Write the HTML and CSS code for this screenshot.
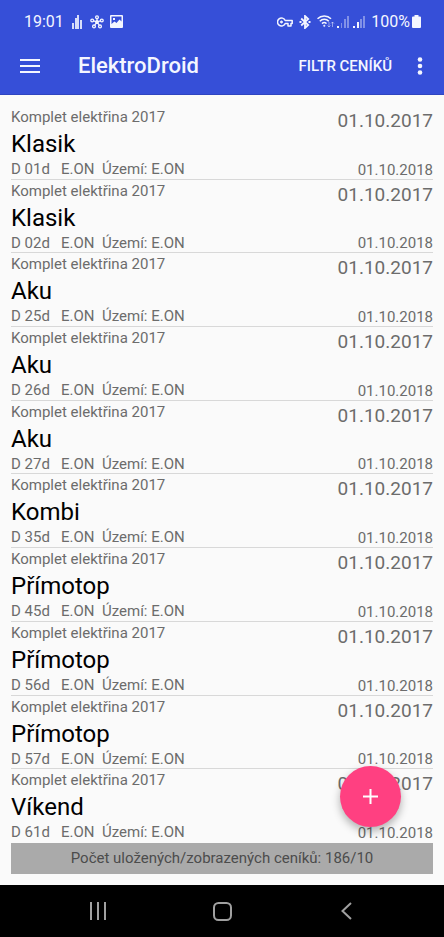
FILE: index.html
```html
<!DOCTYPE html>
<html lang="cs">
<head>
<meta charset="utf-8">
<meta name="viewport" content="width=device-width, initial-scale=1">
<title>ElektroDroid</title>
<link rel="stylesheet" href="styles.css">
</head>
<body>
<header class="top">
  <div class="status">
    <span class="clock">19:01</span>
    <svg class="ic-bars" width="10" height="16" viewBox="0 0 10 16" fill="currentColor"><path d="M0 9h2v6H0zM3 4h2v11H3zM5 1h2v14H5zM8 6h2v9H8z" opacity=".85"/></svg>
    <svg class="ic-hub" width="14" height="14" viewBox="0 0 14 14" fill="none" stroke="currentColor" stroke-width="1.300"><path d="M7 7V3.500M7 7L3.500 5.800M7 7l3.500-1.200M7 7l-2.200 3.200M7 7l2.200 3.200"/><circle cx="7" cy="2.200" r="1.400"/><circle cx="2.200" cy="5.500" r="1.400"/><circle cx="11.800" cy="5.500" r="1.400"/><circle cx="4" cy="11.400" r="1.400"/><circle cx="10" cy="11.400" r="1.400"/><circle cx="7" cy="7" r="1.300" fill="currentColor"/></svg>
    <svg class="ic-image" width="13" height="13" viewBox="0 0 13 13"><path fill="currentColor" fill-rule="evenodd" d="M1 0h11a1 1 0 0 1 1 1v11a1 1 0 0 1-1 1H1a1 1 0 0 1-1-1V1a1 1 0 0 1 1-1zM1.500 1.500V9l3-2.500 2 1.500 3-3.500 2 2v-5zM3 3h2v2H3z"/></svg>
    <span class="spacer"></span>
    <svg class="ic-key" width="16" height="10" viewBox="0 0 16 10" fill="none" stroke="currentColor" stroke-width="1.500"><path d="M8.200 3.500A4 4 0 1 0 8.200 6.500H11V9h3V6.500h1.200v-3z" stroke-linejoin="round"/><circle cx="4.500" cy="5" r="1" fill="currentColor" stroke-width="1"/></svg>
    <svg class="ic-bt" width="12" height="14" viewBox="0 0 12 14" fill="none" stroke="currentColor" stroke-width="1.800"><path d="M2.200 3.500l7 6.500L6 13V1l3.200 3-7 6.500"/><path d="M.5 7H2.500M9.500 7h2"/></svg>
    <svg class="ic-wifi" width="18" height="15" viewBox="0 0 18 15" fill="none" stroke="currentColor" stroke-width="1.500"><path d="M.5 4.800a9.500 9.500 0 0 1 13.500 0M2.800 7.300a6.200 6.200 0 0 1 9 0M5 9.600a3.200 3.200 0 0 1 4.500 0"/><circle cx="7.300" cy="11.800" r=".8" fill="currentColor" stroke-width=".5"/><path d="M12 8v5M10.500 11.500L12 13l1.500-1.500M15.500 13V8M14 9.500L15.500 8 17 9.500" stroke-width="1" opacity=".5"/></svg>
    <svg class="ic-sig1" width="12" height="13" viewBox="0 0 12 13" fill="currentColor"><path d="M0 11h2v2H0z"/><path d="M4 8h1v5H4zM7 4h2v9H7zM10 1h2v12h-2z" opacity=".4"/></svg>
    <svg class="ic-sig2" width="12" height="13" viewBox="0 0 12 13" fill="currentColor"><path d="M0 11h2v2H0zM4 7h2v6H4z"/><path d="M7 4h2v9H7zM10 1h2v12h-2z" opacity=".4"/></svg>
    <span class="percent">100%</span>
    <svg class="ic-batt" width="9" height="13" viewBox="0 0 9 13" fill="currentColor"><path d="M2.500 0h4v1.500H8a1 1 0 0 1 1 1V12a1 1 0 0 1-1 1H1a1 1 0 0 1-1-1V2.500a1 1 0 0 1 1-1h1.500z"/></svg>
  </div>
  <div class="toolbar">
    <button class="icon-btn menu" aria-label="Menu"><svg width="20" height="14" viewBox="0 0 20 14" fill="currentColor"><path d="M0 0h20v2H0zM0 6h20v2H0zM0 12h20v2H0z"/></svg></button>
    <h1 class="title">ElektroDroid</h1>
    <button class="filter">FILTR CENÍKŮ</button>
    <button class="icon-btn more" aria-label="Více"><svg width="6" height="18" viewBox="0 0 6 18" fill="currentColor"><circle cx="3" cy="2.500" r="2.300"/><circle cx="3" cy="9" r="2.300"/><circle cx="3" cy="15.500" r="2.300"/></svg></button>
  </div>
</header>
<main class="content">
  <ul class="list">
    <li class="row"><div class="info"><span class="small">Komplet elektřina 2017</span><span class="name">Klasik</span><span class="small detail">D 01d   E.ON  Území: E.ON</span></div><div class="dates"><span class="from">01.10.2017</span><span class="small">01.10.2018</span></div></li>
    <li class="row"><div class="info"><span class="small">Komplet elektřina 2017</span><span class="name">Klasik</span><span class="small detail">D 02d   E.ON  Území: E.ON</span></div><div class="dates"><span class="from">01.10.2017</span><span class="small">01.10.2018</span></div></li>
    <li class="row"><div class="info"><span class="small">Komplet elektřina 2017</span><span class="name">Aku</span><span class="small detail">D 25d   E.ON  Území: E.ON</span></div><div class="dates"><span class="from">01.10.2017</span><span class="small">01.10.2018</span></div></li>
    <li class="row"><div class="info"><span class="small">Komplet elektřina 2017</span><span class="name">Aku</span><span class="small detail">D 26d   E.ON  Území: E.ON</span></div><div class="dates"><span class="from">01.10.2017</span><span class="small">01.10.2018</span></div></li>
    <li class="row"><div class="info"><span class="small">Komplet elektřina 2017</span><span class="name">Aku</span><span class="small detail">D 27d   E.ON  Území: E.ON</span></div><div class="dates"><span class="from">01.10.2017</span><span class="small">01.10.2018</span></div></li>
    <li class="row"><div class="info"><span class="small">Komplet elektřina 2017</span><span class="name">Kombi</span><span class="small detail">D 35d   E.ON  Území: E.ON</span></div><div class="dates"><span class="from">01.10.2017</span><span class="small">01.10.2018</span></div></li>
    <li class="row"><div class="info"><span class="small">Komplet elektřina 2017</span><span class="name">Přímotop</span><span class="small detail">D 45d   E.ON  Území: E.ON</span></div><div class="dates"><span class="from">01.10.2017</span><span class="small">01.10.2018</span></div></li>
    <li class="row"><div class="info"><span class="small">Komplet elektřina 2017</span><span class="name">Přímotop</span><span class="small detail">D 56d   E.ON  Území: E.ON</span></div><div class="dates"><span class="from">01.10.2017</span><span class="small">01.10.2018</span></div></li>
    <li class="row"><div class="info"><span class="small">Komplet elektřina 2017</span><span class="name">Přímotop</span><span class="small detail">D 57d   E.ON  Území: E.ON</span></div><div class="dates"><span class="from">01.10.2017</span><span class="small">01.10.2018</span></div></li>
    <li class="row"><div class="info"><span class="small">Komplet elektřina 2017</span><span class="name">Víkend</span><span class="small detail">D 61d   E.ON  Území: E.ON</span></div><div class="dates"><span class="from">01.10.2017</span><span class="small">01.10.2018</span></div></li>
  </ul>
  <p class="summary">Počet uložených/zobrazených ceníků: 186/10</p>
  <button class="fab" aria-label="Přidat ceník"><svg width="15" height="15" viewBox="0 0 15 15" fill="currentColor"><path d="M6.500 0h2v6.500H15v2H8.500V15h-2V8.500H0v-2h6.500z"/></svg></button>
</main>
<nav class="navbar">
  <button class="nav-btn" aria-label="Poslední aplikace"><svg width="18" height="18" viewBox="0 0 18 18" fill="none" stroke="currentColor" stroke-width="2"><path d="M2 0v18M9 0v18M16 0v18"/></svg></button>
  <button class="nav-btn" aria-label="Domů"><svg width="19" height="19" viewBox="0 0 19 19" fill="none" stroke="currentColor" stroke-width="2"><rect x="1" y="1" width="17" height="17" rx="4.500"/></svg></button>
  <button class="nav-btn" aria-label="Zpět"><svg width="18" height="18" viewBox="0 0 18 18" fill="none" stroke="currentColor" stroke-width="2"><path d="M14 1L5.500 9l8.500 8"/></svg></button>
</nav>
</body>
</html>
```
FILE: styles.css
```css
* {
  box-sizing: border-box;
}

body {
  margin: 0;
  min-height: 100vh;
  display: flex;
  flex-direction: column;
  background: #fafafa;
  color: #000;
  font-family: Roboto, "Noto Sans", sans-serif;
}

button {
  border: 0;
  padding: 0;
  background: none;
  color: inherit;
  font-family: inherit;
  cursor: pointer;
}

svg {
  display: block;
  flex: none;
}

.top {
  background: #364fd8;
  color: #f4f6ff;
  border-bottom: 1px solid #2f45c0;
}

.status {
  display: flex;
  align-items: center;
  height: 43px;
  padding: 0 23px 0 24px;
}

.clock,
.percent {
  font-size: 16px;
  line-height: 20px;
}

.ic-bars { margin-left: 8px; }
.ic-hub { margin-left: 8px; }
.ic-image { margin-left: 6px; }
.spacer { flex: 1; }
.ic-bt { margin-left: 6px; }
.ic-wifi { margin-left: 6px; }
.ic-sig1 { margin-left: 2px; }
.ic-sig2 { margin-left: 4px; }
.percent { margin-left: 6px; }
.ic-batt { margin-left: 2px; }

.toolbar {
  display: flex;
  align-items: center;
  height: 51px;
  padding: 0 21px 6px 20px;
}

.icon-btn {
  display: flex;
  align-items: center;
  height: 44px;
}

.title {
  flex: 1;
  margin: 0 0 0 38px;
  font-size: 22px;
  line-height: 28px;
  font-weight: 500;
}

.filter {
  font-size: 15px;
  line-height: 20px;
  font-weight: 500;
}

.more {
  margin-left: 25px;
}

.content {
  position: relative;
  flex: 1;
  display: flex;
  flex-direction: column;
  padding: 11px;
}

.list {
  flex: 1;
  display: grid;
  grid-auto-rows: 1fr;
  margin: 0;
  padding: 0;
  list-style: none;
}

.row {
  display: flex;
  justify-content: space-between;
  padding-top: 2px;
  border-bottom: 1px solid #d8d8d8;
}

.row:last-child {
  border-bottom-color: transparent;
}

.info,
.dates {
  display: flex;
  flex-direction: column;
}

.dates {
  align-items: flex-end;
  justify-content: space-between;
}

.small {
  color: #6c6c6c;
  font-size: 15px;
  line-height: 18px;
}

.detail {
  white-space: pre;
}

.name {
  padding-top: 2px;
  font-size: 24px;
  line-height: 32px;
}

.from {
  color: #6c6c6c;
  font-size: 19px;
  line-height: 26px;
}

.summary {
  margin: 0;
  padding: 6px;
  background: #aaa;
  color: #4c4c4c;
  font-size: 15px;
  line-height: 19px;
  text-align: center;
}

.fab {
  position: absolute;
  right: 43px;
  bottom: 58px;
  display: grid;
  place-items: center;
  width: 61px;
  height: 61px;
  border-radius: 50%;
  background: #ff4081;
  color: #fff;
  box-shadow: 0 4px 8px rgba(0, 0, 0, 0.3);
}

.navbar {
  display: grid;
  grid-template-columns: repeat(3, 124px);
  justify-content: center;
  height: 52px;
  background: #000;
  color: #a0a0a0;
}

.nav-btn {
  display: grid;
  place-items: center;
}
```
